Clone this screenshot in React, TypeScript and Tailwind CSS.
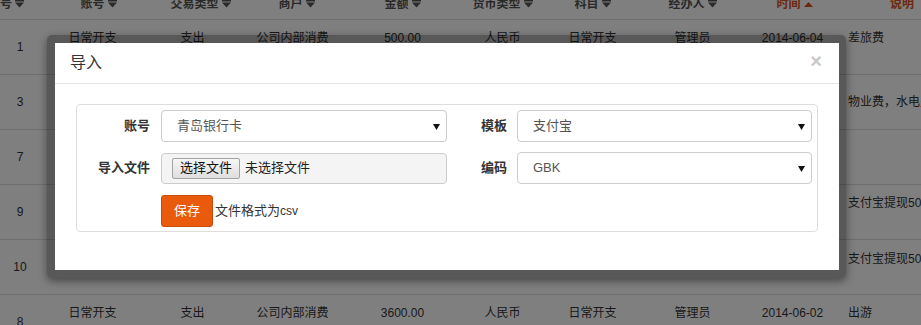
import React from "react";

const FONT = { fontFamily: '"Liberation Sans", "Noto Sans CJK SC", sans-serif' };

function SortDown({ color = "#555" }: { color?: string }) {
  return (
    <svg width="9" height="8" viewBox="0 0 9 8" className="inline-block ml-[3px] align-middle">
      <rect x="0" y="0" width="9" height="1.5" fill={color} />
      <path d="M0 2.5 L9 2.5 L4.5 7.5 Z" fill={color} />
    </svg>
  );
}

function SortUp({ color }: { color: string }) {
  return (
    <svg width="9" height="6" viewBox="0 0 9 6" className="inline-block ml-[3px] align-middle">
      <path d="M0 6 L9 6 L4.5 1 Z" fill={color} />
    </svg>
  );
}

const cols = "grid grid-cols-[40px_105px_95px_105px_115px_85px_95px_105px_95px_1fr]";

type Row = {
  n: string;
  cells: string[];
  note: string;
  notePad?: string;
};

const rows: Row[] = [
  { n: "1", cells: ["日常开支", "支出", "公司内部消费", "500.00", "人民币", "日常开支", "管理员", "2014-06-04"], note: "差旅费" },
  { n: "3", cells: ["日常开支", "支出", "公司内部消费", "800.00", "人民币", "日常开支", "管理员", "2014-06-04"], note: "物业费，水电费", notePad: "pt-[19px]" },
  { n: "7", cells: ["日常开支", "支出", "公司内部消费", "300.00", "人民币", "日常开支", "管理员", "2014-06-03"], note: "" },
  { n: "9", cells: ["日常开支", "支出", "公司内部消费", "500.00", "人民币", "日常开支", "管理员", "2014-06-03"], note: "支付宝提现500" },
  { n: "10", cells: ["日常开支", "支出", "公司内部消费", "500.00", "人民币", "日常开支", "管理员", "2014-06-03"], note: "支付宝提现500", notePad: "pt-[11px]" },
  { n: "8", cells: ["日常开支", "支出", "公司内部消费", "3600.00", "人民币", "日常开支", "管理员", "2014-06-02"], note: "出游" },
];

function Arrow() {
  return (
    <svg width="7" height="7" viewBox="0 0 7 7">
      <path d="M0 1 L7 1 L3.5 7 Z" fill="#111" />
    </svg>
  );
}

function Select({ value, w }: { value: string; w: string }) {
  return (
    <div className={`${w} h-[32px] border border-[#ccc] rounded-[4px] bg-white flex items-center justify-between pl-[15px] pr-[6px] text-[13px] text-[#555]`}>
      <span>{value}</span>
      <Arrow />
    </div>
  );
}

export default function App() {
  return (
    <div className="relative w-[921px] h-[325px] overflow-hidden bg-white" style={FONT}>
      {/* background table */}
      <div className="-mt-[12px] w-[1000px]">
        <div className={`${cols} h-[32px] border-b border-[#ddd] text-[12px] font-bold text-[#555] items-center`}>
          <div className="text-center -ml-[28px]">序号<SortDown /></div>
          <div className="text-center pl-[12px]">账号<SortDown /></div>
          <div className="text-center pl-[16px]">交易类型<SortDown /></div>
          <div className="text-center pl-[8px]">商户<SortDown /></div>
          <div className="text-center">金额<SortDown /></div>
          <div className="text-center">货币类型<SortDown /></div>
          <div className="text-center">科目<SortDown /></div>
          <div className="text-center">经办人<SortDown /></div>
          <div className="text-center pl-[4px] text-[#d6531c]">时间<SortUp color="#d6531c" /></div>
          <div className="pl-[50px] text-[#d6531c]">说明</div>
        </div>
        {rows.map((r) => (
          <div key={r.n} className={`${cols} h-[55px] border-b border-[#ddd] text-[12px] text-[#333] leading-[16px]`}>
            <div className="flex items-center justify-center">{r.n}</div>
            {r.cells.map((c, i) => (
              <div key={i} className="text-center pt-[10px] whitespace-nowrap">{c}</div>
            ))}
            <div className={`pl-[8px] whitespace-nowrap ${r.notePad ?? "pt-[10px]"}`}>{r.note}</div>
          </div>
        ))}
      </div>

      {/* backdrop */}
      <div className="absolute inset-0 bg-black/50" />

      {/* modal */}
      <div className="absolute left-[47px] top-[35px] w-[799px] p-[8px] pr-[7px] bg-black/30 rounded-[5px] shadow-[0_3px_9px_rgba(0,0,0,0.45)]">
        <div className="bg-white w-[784px] h-[227px] flex flex-col">
          <div className="h-[41px] border-b border-[#e5e5e5] flex items-center justify-between pl-[15px] pr-[17px]">
            <span className="text-[16px] text-[#333]">导入</span>
            <span className="text-[20px] font-bold leading-none text-[#c8c8c8] -mt-[4px]">×</span>
          </div>
          <div className="pt-[20px] px-[21px]">
            <div className="border border-[#ddd] rounded-[4px] h-[128px] pt-[5px] flex flex-col gap-[10px] text-[13px]">
              <div className="flex items-center">
                <div className="w-[73px] text-right font-bold text-[#333]">账号</div>
                <div className="w-[11px]" />
                <Select value="青岛银行卡" w="w-[286px]" />
                <div className="w-[34px]" />
                <div className="w-[26px] text-right font-bold text-[#333]">模板</div>
                <div className="w-[10px]" />
                <Select value="支付宝" w="w-[295px]" />
              </div>
              <div className="flex items-center">
                <div className="w-[73px] text-right font-bold text-[#333]">导入文件</div>
                <div className="w-[11px]" />
                <div className="w-[286px] h-[31px] border border-[#ccc] rounded-[4px] bg-[#f4f4f4] flex items-center pl-[10px] text-[#222]">
                  <span className="h-[21px] px-[7px] flex items-center border border-[#a3a3a3] rounded-[2px] bg-gradient-to-b from-[#f6f6f6] to-[#dedede] text-[#111]">选择文件</span>
                  <span className="ml-[5px]">未选择文件</span>
                </div>
                <div className="w-[34px]" />
                <div className="w-[26px] text-right font-bold text-[#333]">编码</div>
                <div className="w-[10px]" />
                <Select value="GBK" w="w-[295px]" />
              </div>
              <div className="flex items-center pt-[1px]">
                <div className="w-[84px]" />
                <div className="w-[52px] h-[32px] rounded-[3px] border border-[#c94c08] bg-[#ea5a0c] text-white flex items-center justify-center">保存</div>
                <span className="ml-[2px] text-[#333]">文件格式为<span className="text-[12px]">csv</span></span>
              </div>
            </div>
          </div>
        </div>
      </div>
    </div>
  );
}
